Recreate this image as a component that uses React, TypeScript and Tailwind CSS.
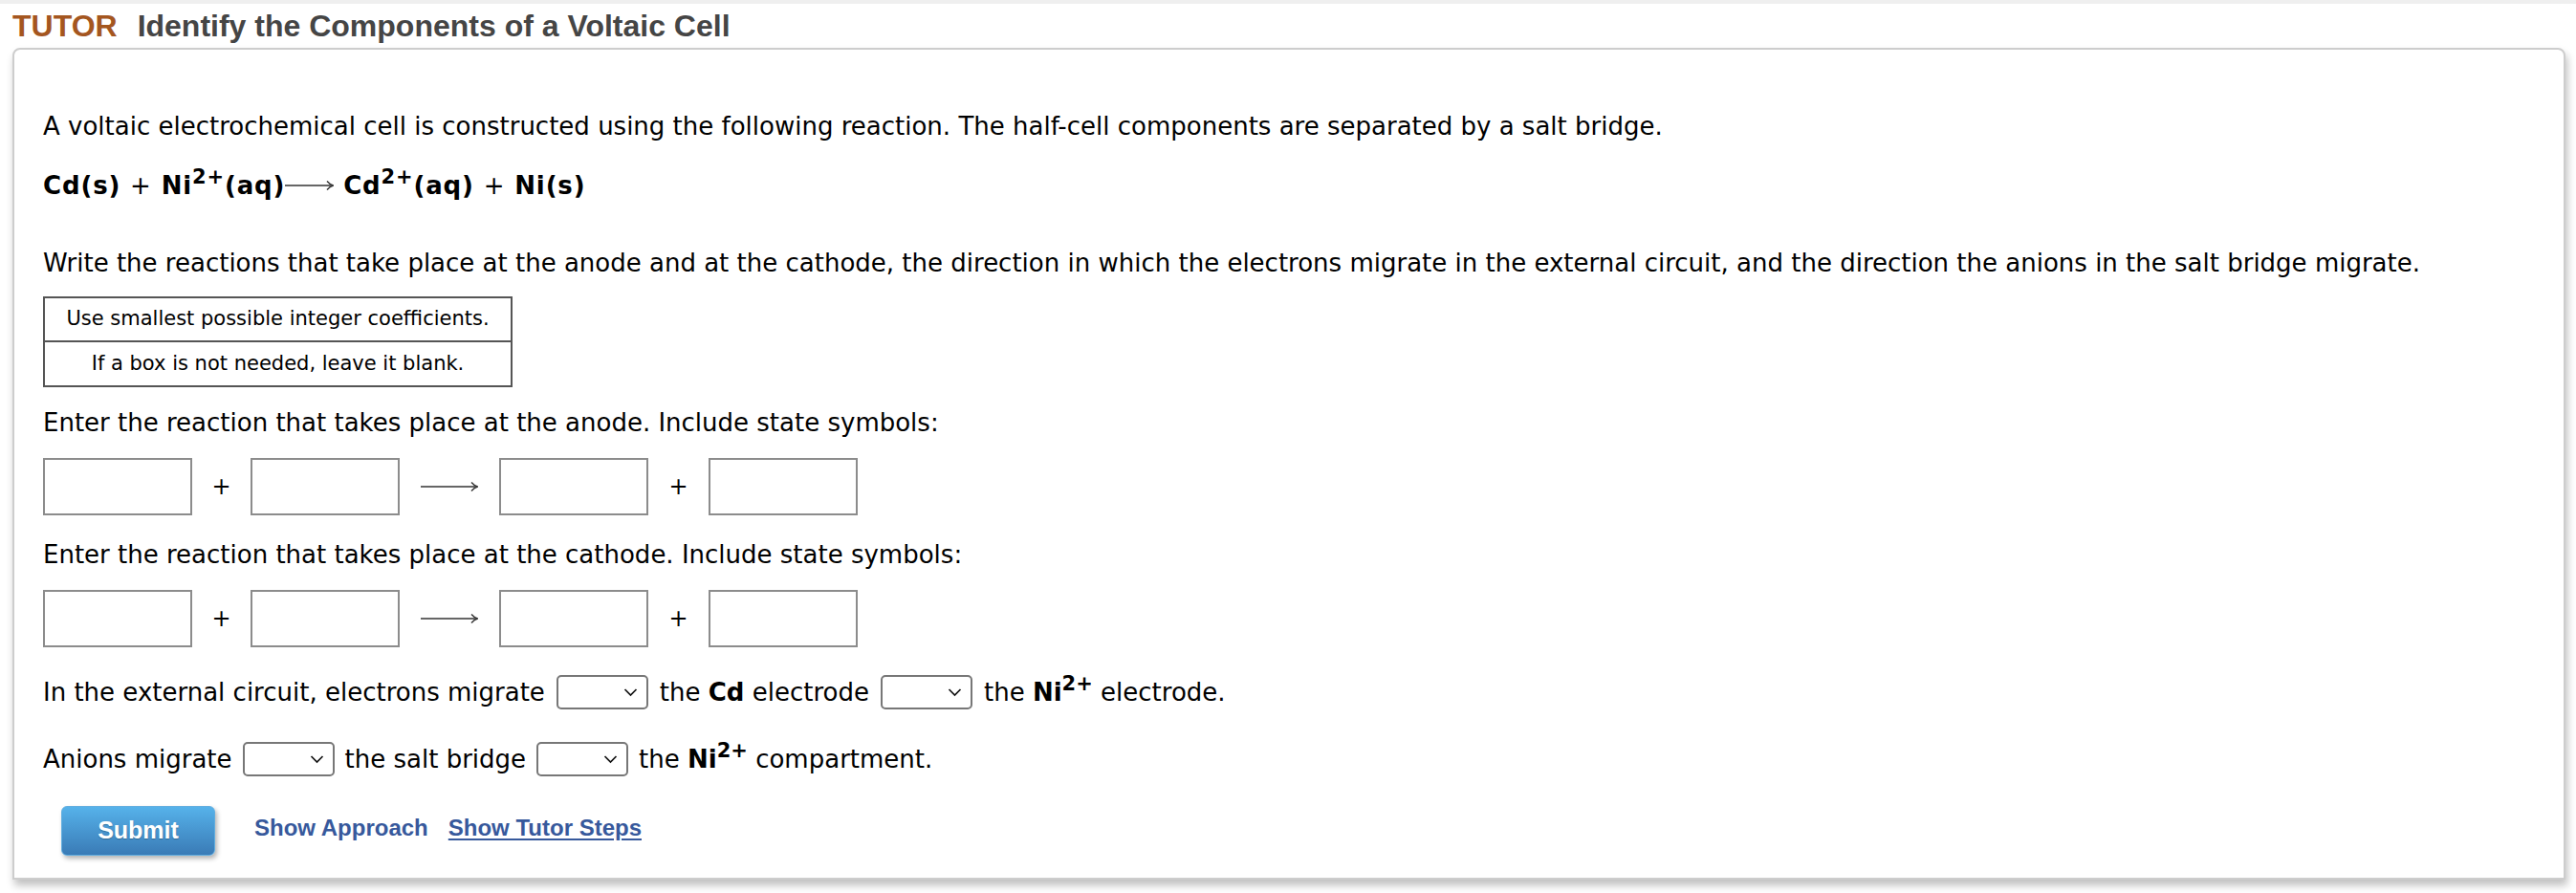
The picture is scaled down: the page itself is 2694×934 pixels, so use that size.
import React from "react";

function LongArrow({ w, className }: { w: number; className?: string }) {
    return (
        <svg width={w} height="12" viewBox={`0 0 ${w} 12`} className={className}>
            <line x1="0" y1="6" x2={w - 1} y2="6" stroke="#333" strokeWidth="1.6" />
            <path d={`M ${w - 7} 1.5 Q ${w - 4} 5 ${w - 0.5} 6 Q ${w - 4} 7 ${w - 7} 10.5`} fill="none" stroke="#333" strokeWidth="1.4" />
        </svg>
    );
}

function Box() {
    return <div className="h-[60px] w-[156px] border-2 border-[#8c8c8c] bg-white" />;
}

function Dropdown() {
    return (
        <div className="flex h-[36px] w-[96px] shrink-0 items-center justify-end rounded-[5px] border-2 border-[#777] bg-white pr-[9px]">
            <svg width="15" height="10" viewBox="0 0 15 10">
                <path d="M1.5 2 L7.5 8 L13.5 2" fill="none" stroke="#111" strokeWidth="1.7" />
            </svg>
        </div>
    );
}

function ReactionRow() {
    return (
        <div className="flex h-[60px] items-center">
            <Box />
            <span className="w-[61px] text-center text-[24px]">+</span>
            <Box />
            <span className="flex w-[104px] justify-center">
                <LongArrow w={60} />
            </span>
            <Box />
            <span className="w-[63px] text-center text-[24px]">+</span>
            <Box />
        </div>
    );
}

export default function App() {
    return (
        <main className="min-h-screen bg-white pb-[14px] font-['DejaVu_Sans',Verdana,sans-serif] text-[26px] text-black">
            <div className="h-[4px] bg-[#efefef]" />

            <h1 className="flex pl-[13px] pt-[5px] font-['Liberation_Sans',Arial,sans-serif] text-[32px] font-bold leading-[36px] text-[#454545]">
                <span className="mr-[21px] text-[#a4561f]">TUTOR</span>
                Identify the Components of a Voltaic Cell
            </h1>

            <section className="ml-[13px] mr-[11px] mt-[5px] flex flex-col rounded-t-[8px] border-2 border-[#cdcdcd] bg-white pb-[23px] pl-[30px] pt-[65px] shadow-[2px_6px_8px_rgba(0,0,0,0.25)]">
                <p className="leading-[30px]">
                    A voltaic electrochemical cell is constructed using the following reaction. The half-cell components are separated by a salt bridge.
                </p>

                <p className="mt-[32px] font-bold leading-[30px] tracking-[0.85px]">
                    Cd(s) <span className="font-normal">+</span> Ni<sup className="-top-[11px] text-[21px]">2+</sup>(aq)
                    <LongArrow w={51} className="inline-block align-[3px]" /> Cd<sup className="-top-[11px] text-[21px]">2+</sup>(aq){" "}
                    <span className="font-normal">+</span> Ni(s)
                </p>

                <p className="mt-[51px] leading-[30px]">
                    Write the reactions that take place at the anode and at the cathode, the direction in which the electrons migrate in the external circuit, and the direction the anions in the salt bridge migrate.
                </p>

                <div className="mt-[20px] w-[491px] border-2 border-[#555] text-center text-[21px]">
                    <div className="flex h-[46px] items-center justify-center border-b-2 border-[#555]">
                        Use smallest possible integer coefficients.
                    </div>
                    <div className="flex h-[45px] items-center justify-center">
                        If a box is not needed, leave it blank.
                    </div>
                </div>

                <p className="mt-[22px] leading-[30px]">
                    Enter the reaction that takes place at the anode. Include state symbols:
                </p>
                <div className="mt-[22px]">
                    <ReactionRow />
                </div>

                <p className="mt-[26px] leading-[30px]">
                    Enter the reaction that takes place at the cathode. Include state symbols:
                </p>
                <div className="mt-[22px]">
                    <ReactionRow />
                </div>

                <div className="mt-[29px] flex h-[36px] items-center gap-[12px] leading-[30px]">
                    <span>In the external circuit, electrons migrate</span>
                    <Dropdown />
                    <span>
                        the <b>Cd</b> electrode
                    </span>
                    <Dropdown />
                    <span>
                        the <b>Ni<sup className="-top-[11px] text-[21px]">2+</sup></b> electrode.
                    </span>
                </div>

                <div className="mt-[34px] flex h-[36px] items-center gap-[11px] leading-[30px]">
                    <span>Anions migrate</span>
                    <Dropdown />
                    <span>the salt bridge</span>
                    <Dropdown />
                    <span>
                        the <b>Ni<sup className="-top-[11px] text-[21px]">2+</sup></b> compartment.
                    </span>
                </div>

                <div className="mt-[31px] flex items-start font-['Liberation_Sans',Arial,sans-serif] font-bold">
                    <button className="ml-[19px] h-[52px] w-[161px] rounded-[6px] border border-[#62aee0] bg-gradient-to-b from-[#56b2ea] to-[#3a7bb6] text-[25px] text-white shadow-[2px_3px_5px_rgba(0,0,0,0.3)] [text-shadow:0_1px_1px_rgba(0,0,0,0.25)]">
                        Submit
                    </button>
                    <a className="ml-[41px] mt-[8px] text-[24px] leading-[30px] text-[#37599c]">Show Approach</a>
                    <a className="ml-[21px] mt-[8px] text-[24px] leading-[30px] text-[#37599c] underline underline-offset-[3px]">
                        Show Tutor Steps
                    </a>
                </div>
            </section>
        </main>
    );
}
